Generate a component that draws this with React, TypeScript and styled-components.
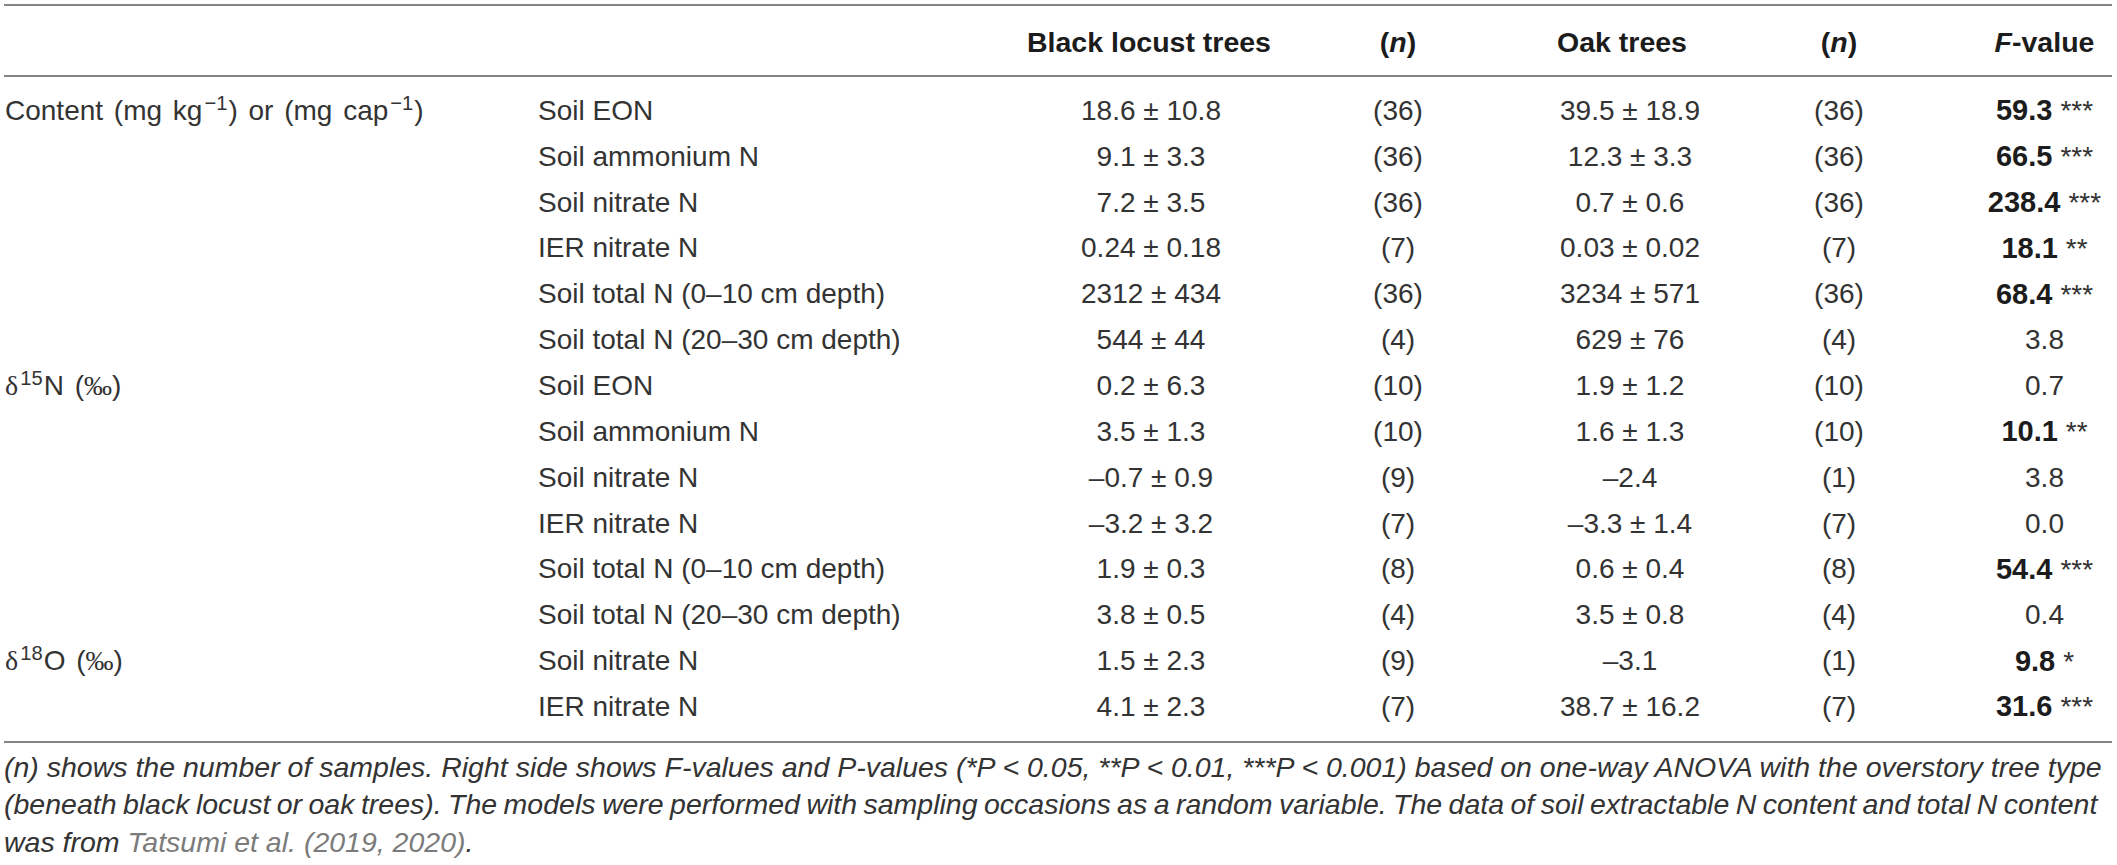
import styled, { createGlobalStyle } from "styled-components";

const GlobalStyle = createGlobalStyle`
  body {
    margin: 0;
    background: #ffffff;
    font-family: "Liberation Sans", Arial, sans-serif;
    color: #333333;
  }
`;

const COLS = "534px 489px 248px 246px 218px 200px 173px";
const RULE = "2px solid #858585";

const Wrapper = styled.div`
  margin: 4px 5px 0 4px;
  width: 2108px;
`;

const Table = styled.div`
  border-top: ${RULE};
  border-bottom: ${RULE};
`;

const HeadRow = styled.div`
  display: grid;
  grid-template-columns: ${COLS};
  height: 71px;
  padding-top: 4px;
  box-sizing: border-box;
  align-items: center;
  border-bottom: ${RULE};
  font-size: 28.5px;
  font-weight: 700;
  color: #1c1c1c;
`;

const HeadCell = styled.div<{ $shift?: number }>`
  text-align: center;
  white-space: nowrap;
  padding-right: ${(p) => (p.$shift && p.$shift > 0 ? p.$shift : 0)}px;
  padding-left: ${(p) => (p.$shift && p.$shift < 0 ? -p.$shift : 0)}px;
`;

const Body = styled.div`
  padding: 11px 0;
`;

const Row = styled.div`
  display: grid;
  grid-template-columns: ${COLS};
  height: 45.85px;
  align-items: center;
  font-size: 28px;
  white-space: nowrap;
`;

const GroupCell = styled.div`
  padding-left: 1px;
  word-spacing: 3px;
`;

const LabelCell = styled.div``;

const ValueCell = styled.div<{ $pad?: number }>`
  text-align: center;
  padding-left: ${(p) => p.$pad ?? 0}px;
`;

const Strong = styled.b`
  font-weight: 700;
  font-size: 29px;
  color: #1c1c1c;
`;

const Stars = styled.span`
  margin-left: 8px;
`;

const Sup = styled.sup`
  font-size: 0.72em;
  line-height: 0;
  vertical-align: 0.5em;
  margin: 0 1px 0 2px;
`;

const Delta = styled.span`
  font-family: "Liberation Serif", "DejaVu Serif", serif;
`;

const Permil = styled.span`
  font-family: "Liberation Serif", "DejaVu Serif", serif;
`;

const Note = styled.div`
  padding-top: 6px;
  font-size: 28.5px;
  font-style: italic;
  line-height: 37.5px;
  color: #333333;
`;

const NoteLine = styled.div<{ $tight?: boolean }>`
  white-space: nowrap;
  word-spacing: ${(p) => (p.$tight ? "-1.5px" : "0")};
`;

const Cite = styled.span`
  color: #7b7b7b;
`;

type DataRow = {
  group?: React.ReactNode;
  label: string;
  locust: string;
  nL: string;
  oak: string;
  nO: string;
  f: string;
  stars?: string;
};

const content = (
  <>
    Content (mg kg<Sup>−1</Sup>) or (mg cap<Sup>−1</Sup>)
  </>
);

const d15 = (
  <>
    <Delta>δ</Delta>
    <Sup>15</Sup>N (<Permil>‰</Permil>)
  </>
);

const d18 = (
  <>
    <Delta>δ</Delta>
    <Sup>18</Sup>O (<Permil>‰</Permil>)
  </>
);

const rows: DataRow[] = [
  { group: content, label: "Soil EON", locust: "18.6 ± 10.8", nL: "(36)", oak: "39.5 ± 18.9", nO: "(36)", f: "59.3", stars: "***" },
  { label: "Soil ammonium N", locust: "9.1 ± 3.3", nL: "(36)", oak: "12.3 ± 3.3", nO: "(36)", f: "66.5", stars: "***" },
  { label: "Soil nitrate N", locust: "7.2 ± 3.5", nL: "(36)", oak: "0.7 ± 0.6", nO: "(36)", f: "238.4", stars: "***" },
  { label: "IER nitrate N", locust: "0.24 ± 0.18", nL: "(7)", oak: "0.03 ± 0.02", nO: "(7)", f: "18.1", stars: "**" },
  { label: "Soil total N (0–10 cm depth)", locust: "2312 ± 434", nL: "(36)", oak: "3234 ± 571", nO: "(36)", f: "68.4", stars: "***" },
  { label: "Soil total N (20–30 cm depth)", locust: "544 ± 44", nL: "(4)", oak: "629 ± 76", nO: "(4)", f: "3.8" },
  { group: d15, label: "Soil EON", locust: "0.2 ± 6.3", nL: "(10)", oak: "1.9 ± 1.2", nO: "(10)", f: "0.7" },
  { label: "Soil ammonium N", locust: "3.5 ± 1.3", nL: "(10)", oak: "1.6 ± 1.3", nO: "(10)", f: "10.1", stars: "**" },
  { label: "Soil nitrate N", locust: "–0.7 ± 0.9", nL: "(9)", oak: "–2.4", nO: "(1)", f: "3.8" },
  { label: "IER nitrate N", locust: "–3.2 ± 3.2", nL: "(7)", oak: "–3.3 ± 1.4", nO: "(7)", f: "0.0" },
  { label: "Soil total N (0–10 cm depth)", locust: "1.9 ± 0.3", nL: "(8)", oak: "0.6 ± 0.4", nO: "(8)", f: "54.4", stars: "***" },
  { label: "Soil total N (20–30 cm depth)", locust: "3.8 ± 0.5", nL: "(4)", oak: "3.5 ± 0.8", nO: "(4)", f: "0.4" },
  { group: d18, label: "Soil nitrate N", locust: "1.5 ± 2.3", nL: "(9)", oak: "–3.1", nO: "(1)", f: "9.8", stars: "*" },
  { label: "IER nitrate N", locust: "4.1 ± 2.3", nL: "(7)", oak: "38.7 ± 16.2", nO: "(7)", f: "31.6", stars: "***" },
];

const FValue = ({ f, stars }: { f: string; stars?: string }) =>
  stars ? (
    <>
      <Strong>{f}</Strong>
      <Stars>{stars}</Stars>
    </>
  ) : (
    <>{f}</>
  );

const App = () => (
  <Wrapper>
    <GlobalStyle />
    <Table>
      <HeadRow>
        <div />
        <div />
        <HeadCell $shift={43}>Black locust trees</HeadCell>
        <HeadCell>
          (<i>n</i>)
        </HeadCell>
        <HeadCell $shift={16}>Oak trees</HeadCell>
        <HeadCell>
          (<i>n</i>)
        </HeadCell>
        <HeadCell $shift={-38}>
          <i>F</i>-value
        </HeadCell>
      </HeadRow>
      <Body>
        {rows.map((r, i) => (
          <Row key={i}>
            <GroupCell>{r.group}</GroupCell>
            <LabelCell>{r.label}</LabelCell>
            <ValueCell>{r.locust}</ValueCell>
            <ValueCell>{r.nL}</ValueCell>
            <ValueCell>{r.oak}</ValueCell>
            <ValueCell>{r.nO}</ValueCell>
            <ValueCell $pad={38}>
              <FValue f={r.f} stars={r.stars} />
            </ValueCell>
          </Row>
        ))}
      </Body>
    </Table>
    <Note>
      <NoteLine>
        (n) shows the number of samples. Right side shows F-values and P-values (*P &lt; 0.05, **P &lt; 0.01,
        ***P &lt; 0.001) based on one-way ANOVA with the overstory tree type
      </NoteLine>
      <NoteLine $tight>
        (beneath black locust or oak trees). The models were performed with sampling occasions as a random
        variable. The data of soil extractable N content and total N content
      </NoteLine>
      <NoteLine>
        was from <Cite>Tatsumi et al. (2019, 2020)</Cite>.
      </NoteLine>
    </Note>
  </Wrapper>
);

export default App;
